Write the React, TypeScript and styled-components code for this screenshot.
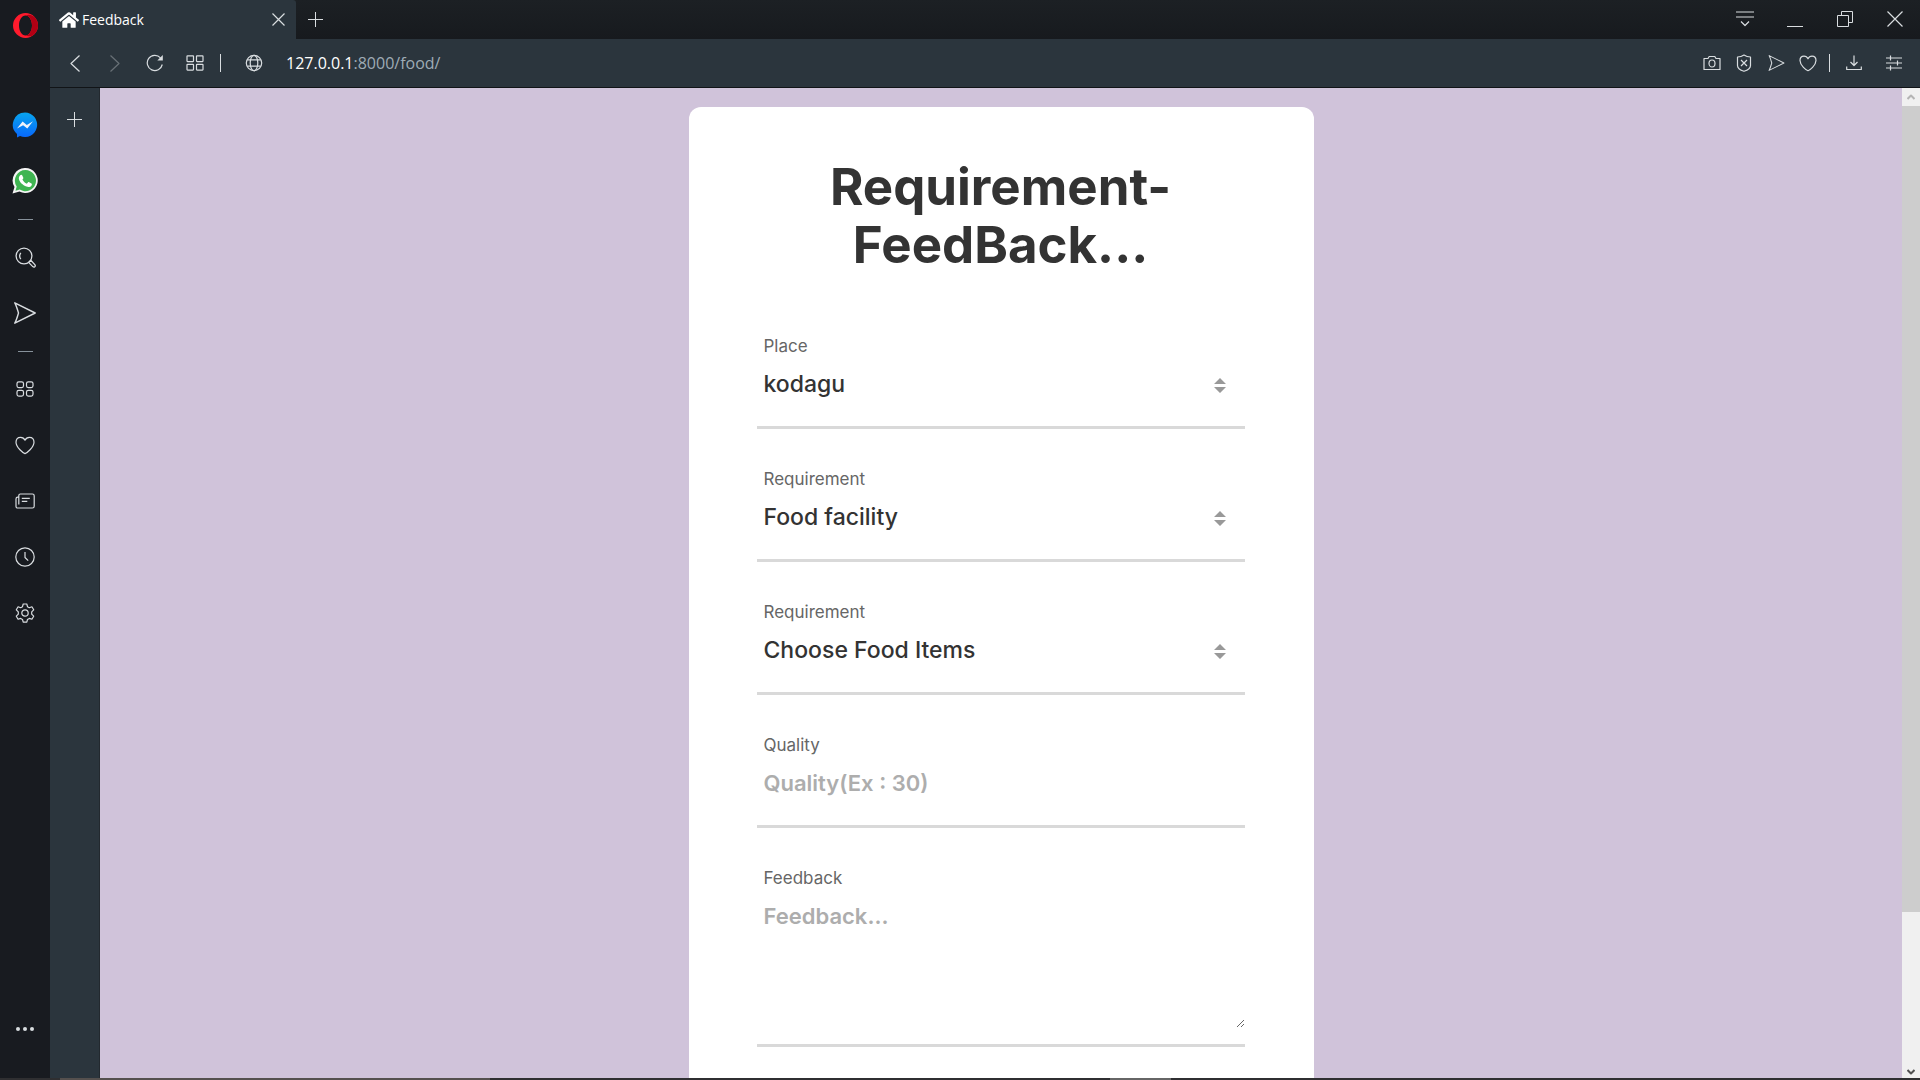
import React from "react";
import styled, { createGlobalStyle } from "styled-components";
import { FaHome } from "react-icons/fa";

const color = {
  chrome: "#2b353d",
  dark: "#181b20",
  line: "#111417",
  icon: "#d9dde0",
  page: "#d0c3da",
};

const GlobalStyle = createGlobalStyle`
  * { box-sizing: border-box; }
  body { margin: 0; background: ${color.page}; }
  button, input, select, textarea { font: inherit; margin: 0; }
`;

const Window = styled.div`
  display: flex;
  flex-direction: column;
  height: 100vh;
  overflow: hidden;
  background: ${color.dark};
  font-family: "Open Sans", "Noto Sans", sans-serif;
`;

const Frame = styled.div`
  display: flex;
  flex: 1;
  min-height: 0;
`;

const Column = styled.div`
  display: flex;
  flex-direction: column;
  flex: 1;
  min-width: 0;
`;

const Sidebar = styled.nav`
  display: flex;
  flex-direction: column;
  align-items: center;
  width: 50px;
  padding: 4px 0 21px;
  background: ${color.dark};
`;

const IconButton = styled.button<{ $w?: number; $h?: number; $dim?: boolean }>`
  display: flex;
  align-items: center;
  justify-content: center;
  flex: none;
  width: ${(p) => p.$w ?? 40}px;
  height: ${(p) => p.$h ?? 40}px;
  padding: 0;
  border: 0;
  background: none;
  color: ${color.icon};
  opacity: ${(p) => (p.$dim ? 0.35 : 1)};
`;

const SideGroup = styled.div<{ $first?: boolean }>`
  display: flex;
  flex-direction: column;
  margin-top: ${(p) => (p.$first ? 51 : 0)}px;
`;

const SideRule = styled.hr`
  width: 15px;
  height: 1px;
  margin: 10px 0 9px;
  border: 0;
  background: #87929b;
`;

const Spacer = styled.div`
  flex: 1;
`;

const TabBar = styled.header`
  display: flex;
  height: 39px;
  background: linear-gradient(#1c2024, #171a1e);
`;

const Tab = styled.div`
  display: flex;
  align-items: center;
  width: 246px;
  padding: 0 0 0 9px;
  border-radius: 0 3px 0 0;
  background: ${color.chrome};
  color: #fff;
  font-size: 14px;
  svg { flex: none; }
`;

const TabTitle = styled.span`
  flex: 1;
  margin-left: 3px;
`;

const Toolbar = styled.div`
  display: flex;
  align-items: center;
  height: 49px;
  padding: 0 6px 0 5px;
  background: ${color.chrome};
  border-bottom: 1px solid ${color.line};
`;

const BarRule = styled.span<{ $after: number }>`
  width: 1px;
  height: 18px;
  margin: 0 ${(p) => p.$after}px 0 5px;
  background: ${color.icon};
`;

const Address = styled.button`
  flex: 1;
  padding: 0 0 0 12px;
  border: 0;
  background: none;
  color: #9fabb5;
  font-size: 16px;
  line-height: 24px;
  text-align: left;
`;

const Host = styled.span`
  color: #fff;
`;

const Body = styled.div`
  display: flex;
  flex: 1;
  min-height: 0;
`;

const Workspace = styled.aside`
  width: 50px;
  padding: 11px 4px;
  background: ${color.chrome};
  border-right: 1px solid #23292f;
`;

const Page = styled.main`
  flex: 1;
  min-width: 0;
  padding: 19px 20px 0;
  overflow: hidden;
  background: ${color.page};
  font-family: Inter, sans-serif;
`;

const Card = styled.form`
  max-width: 625px;
  margin: 0 auto;
  padding: 51px 69px 64px 68px;
  border-radius: 12px;
  background: #fff;
`;

const Title = styled.h1`
  margin: 0 0 60px;
  color: #333;
  font-size: 51px;
  font-weight: 700;
  line-height: 58px;
  text-align: center;
`;

const Field = styled.div`
  position: relative;
  margin-bottom: 38px;
  border-bottom: 3px solid #d9d9d9;
`;

const Label = styled.label`
  display: block;
  margin-bottom: 10px;
  padding-left: 7px;
  color: #666;
  font-size: 17px;
  line-height: 24px;
`;

const controlStyle = `
  display: block;
  width: 100%;
  padding: 0 7px;
  border: 0;
  outline: 0;
  background: transparent;
  font-size: 23px;
  font-weight: 500;
  line-height: 33px;
  color: #333;
  &::placeholder { color: #adadad; opacity: 1; font-size: 22px; font-weight: 600; }
`;

const Select = styled.select`
  ${controlStyle}
  appearance: none;
  height: 33px;
  margin-bottom: 25px;
`;

const Input = styled.input`
  ${controlStyle}
  height: 33px;
  margin-bottom: 25px;
`;

const TextArea = styled.textarea`
  ${controlStyle}
  height: 128px;
  margin-bottom: 16px;
`;

const SortArrows = styled.svg`
  position: absolute;
  right: 19px;
  bottom: 33px;
  pointer-events: none;
`;

const ScrollTrack = styled.div`
  display: flex;
  flex-direction: column;
  width: 18px;
  background: #f0f0f0;
`;

const ScrollEnd = styled.div<{ $tone: string; $h: number }>`
  display: flex;
  align-items: center;
  justify-content: center;
  height: ${(p) => p.$h}px;
  color: ${(p) => p.$tone};
`;

const ScrollThumb = styled.div`
  flex: 806;
  background: #cdcdcd;
`;

const ScrollRest = styled.div`
  flex: 154;
`;

const Taskbar = styled.footer`
  display: flex;
  height: 2px;
  padding-left: 60px;
  background: #2f2f31;
`;

const TaskItem = styled.span<{ $w: number; $gap?: number; $c: string }>`
  width: ${(p) => p.$w}px;
  margin-left: ${(p) => p.$gap ?? 0}px;
  background: ${(p) => p.$c};
`;

type IconProps = { w: number; h?: number; sw?: number; children: React.ReactNode };
const Icon = ({ w, h = w, sw = 1.2, children }: IconProps) => (
  <svg width={w} height={h} viewBox={`0 0 ${w} ${h}`} fill="none" stroke="currentColor" strokeWidth={sw} strokeLinejoin="round" aria-hidden="true">
    {children}
  </svg>
);

const Plus = () => <Icon w={15} sw={1}><path d="M7.5 0v15M0 7.5h15" /></Icon>;
const Cross = ({ s }: { s: number }) => <Icon w={s}><path d={`M.5 .5L${s - 0.5} ${s - 0.5}M${s - 0.5} .5L.5 ${s - 0.5}`} /></Icon>;
const Back = () => <Icon w={10} h={17}><path d="M9.5 .5L1 8.500L9.500 16.500" /></Icon>;
const Forward = () => <Icon w={10} h={17}><path d="M.5 .5L9 8.500L.5 16.500" /></Icon>;
const Reload = () => (
  <Icon w={18}>
    <path d="M16.300 10.500A7.600 7.600 0 1 1 14.500 3.800" />
    <path d="M16.800 1v5.500h-5.500z" fill="currentColor" stroke="none" />
  </Icon>
);
const Tiles = ({ round = 0.5 }: { round?: number }) => (
  <Icon w={18} h={16}>
    <rect x="1" y=".8" width="6.500" height="5.800" rx={round} />
    <rect x="10.500" y=".8" width="6.500" height="5.800" rx={round} />
    <rect x="1" y="9.300" width="6.500" height="5.800" rx={round} />
    <rect x="10.500" y="9.300" width="6.500" height="5.800" rx={round} />
  </Icon>
);
const Globe = () => (
  <Icon w={18}>
    <circle cx="9" cy="9" r="7.700" />
    <ellipse cx="9" cy="9" rx="3.800" ry="7.700" />
    <path d="M2.200 5.800h13.600M2.200 12.200h13.600" />
  </Icon>
);
const Heart = () => (
  <Icon w={20} h={19}>
    <path d="M10 17.600C8.500 17.200 1 11.500 1 6.300 1 3.200 3 1.300 5.600 1.300c1.900 0 3.500 1 4.400 2.900.9-1.900 2.500-2.900 4.400-2.900C17 1.300 19 3.200 19 6.300c0 5.200-7.500 10.900-9 11.300z" />
  </Icon>
);
const SmallHeart = () => (
  <Icon w={18} h={17}>
    <path d="M9 15.700C7.500 15.200 1 10.500 1 5.600 1 2.900 2.700 1.200 5 1.200c1.800 0 3.200.9 4 2.600.8-1.700 2.200-2.600 4-2.600 2.300 0 4 1.700 4 4.400 0 4.900-6.500 9.600-8 10.100z" />
  </Icon>
);
const Send = ({ w, h }: { w: number; h: number }) => (
  <svg width={w} height={h} viewBox="0 0 22 22" fill="none" stroke="currentColor" strokeWidth="1.4" strokeLinejoin="round" aria-hidden="true">
    <path d="M.8 .8L21.200 11L.8 21.200Q2.500 18 4.500 11Q2.500 4 .8 .8z" />
  </svg>
);
const Camera = () => (
  <Icon w={18} h={16}>
    <path d="M1 3.500h4l1.200-2h5.600l1.200 2h4v11H1z" />
    <ellipse cx="9" cy="8.500" rx="3" ry="3.500" />
  </Icon>
);
const Shield = () => (
  <Icon w={16} h={18}>
    <path d="M8 1C6 2.400 3.700 3 1.500 3v8.500C1.500 14 4 16 8 17.300c4-1.300 6.500-3.300 6.500-5.800V3C12.300 3 10 2.400 8 1z" />
    <path d="M5 6l6 6M11 6l-6 6" />
  </Icon>
);
const Download = () => <Icon w={16} h={16}><path d="M8 .5v10M4.500 7L8 10.500L11.500 7M.7 11.500v3h14.600v-3" /></Icon>;
const Sliders = () => <Icon w={16} h={16}><path d="M0 3h16M0 8h16M0 13h16M4.500 .5v5M11.500 5.500v5M4.500 10.500v5" /></Icon>;
const TabMenu = () => <Icon w={18} h={16}><path d="M0 1h18M0 6h18M5 10.500l4 4 4-4" /></Icon>;
const Minimise = () => <Icon w={16} h={16} sw={1}><path d="M0 15.500h16" /></Icon>;
const Restore = () => <Icon w={16} h={16} sw={1}><path d="M.5 4.500h11v11H.5zM4.500 4.500v-4h11v11h-4" /></Icon>;
const Search = () => (
  <Icon w={21} sw={1.3}>
    <circle cx="9" cy="9" r="7.900" />
    <path d="M5.800 5.800q-2.300 3.200 0 6.400M13.600 15.400l2.200-2.200 4 4.400q1 1.300 0 2.100t-2-.1z" />
  </Icon>
);
const News = () => (
  <Icon w={20} h={16}>
    <path d="M3.800 2.600q0-1.600 1.600-1.600h12q1.800 0 1.800 1.800v10.400q0 1.800-1.800 1.800H2.800Q1 15 1 13.200V6q0-1.800 1.800-1.800h1M3.800 2.600v8.800M6.800 5.300h8M6.800 8.300h5.500" />
  </Icon>
);
const Clock = () => <Icon w={20}><circle cx="10" cy="10" r="9.200" /><path d="M10 5v5.500l3.200 3.200" /></Icon>;
const Gear = () => (
  <Icon w={20} h={20}>
    <path d="M8.200 1h3.600l.7 2.700 1.800 1 2.600-.9 1.800 3-2 2v2.400l2 2-1.800 3-2.600-.8-1.800 1-.7 2.700H8.200l-.7-2.700-1.800-1-2.600.8-1.800-3 2-2V8.800l-2-2 1.800-3 2.600.9 1.800-1z" />
    <circle cx="10" cy="10" r="3.200" />
  </Icon>
);
const Dots = () => (
  <svg width="18" height="4" fill="currentColor" aria-hidden="true">
    <circle cx="2" cy="2" r="2" /><circle cx="9" cy="2" r="2" /><circle cx="16" cy="2" r="2" />
  </svg>
);
const Opera = () => (
  <svg width="25" height="25" viewBox="0 0 25 25" aria-hidden="true">
    <path fillRule="evenodd" fill="#ff1b2d" d="M12.500 0a12.500 12.500 0 1 0 0 25 12.500 12.500 0 1 0 0-25zM12.500 2.500c3.700 0 6.500 4.500 6.500 10s-2.800 10-6.500 10S6 18 6 12.500s2.800-10 6.500-10z" />
    <path fill="#b20014" d="M12.500 2.500C16 .8 19.500 2 21.500 4 26.200 8.800 26.200 16.200 21.500 21 19.500 23 16 24.200 12.500 22.500c3.700 0 6.500-4.500 6.500-10s-2.800-10-6.500-10z" />
  </svg>
);
const Messenger = () => (
  <svg width="26" height="26" viewBox="0 0 26 26" aria-hidden="true">
    <defs>
      <linearGradient id="msg" x1="0" y1="0" x2="0" y2="1">
        <stop offset="0" stopColor="#08a5ee" /><stop offset="1" stopColor="#0867fb" />
      </linearGradient>
    </defs>
    <path fill="url(#msg)" d="M13 .5a12.300 12.300 0 1 1-5 23.600L5 25.500V22A12.300 12.300 0 0 1 13 .5z" />
    <path fill="#f1f4fb" d="M5 16.500L10.600 9.500l4.200 3.400 6.200-3.700-5.700 7.300-4.200-3.300z" />
  </svg>
);
const WhatsApp = () => (
  <svg width="26" height="26" viewBox="0 0 26 26" aria-hidden="true">
    <path fill="#f5f5f5" d="M13.500 0A12.500 12.500 0 1 1 7.500 23.600L.5 25.500 2.500 19A12.500 12.500 0 0 1 13.500 0z" />
    <path fill="#3fb551" d="M13.500 2A10.600 10.600 0 1 1 7.800 21.600L3.500 22.700 4.700 18.400A10.600 10.600 0 0 1 13.500 2z" />
    <path fill="#fff" d="M8.200 7.200c.8-.8 1.700-.7 2.100.2l1 2.300c.2.500-.1 1-.9 1.900 1 2 2.400 3.300 4.400 4.200l1.300-1.500c.3-.3.700-.3 1.100-.1l2.300 1.200c.6.4.4 1.300 0 2-.8 1.400-2.800 2-5 1.200-3.900-1.300-6.900-4.400-7.600-7.500-.3-1.500.4-3 1.300-3.900z" />
  </svg>
);

const SelectField = ({ id, label, value }: { id: string; label: string; value: string }) => (
  <Field>
    <Label htmlFor={id}>{label}</Label>
    <Select id={id} defaultValue={value}>
      <option>{value}</option>
    </Select>
    <SortArrows width="12" height="15" viewBox="0 0 12 15" fill="#999" aria-hidden="true">
      <path d="M6 0l6 6H0zM0 9h12l-6 6z" />
    </SortArrows>
  </Field>
);

export default function App() {
  return (
    <Window>
      <GlobalStyle />
      <Frame>
        <Sidebar>
          <IconButton $h={42} aria-label="Opera menu"><Opera /></IconButton>
          <SideGroup $first>
            <IconButton $h={56} aria-label="Messenger"><Messenger /></IconButton>
            <IconButton $h={56} aria-label="WhatsApp"><WhatsApp /></IconButton>
          </SideGroup>
          <SideRule />
          <SideGroup>
            <IconButton $h={56} aria-label="Search"><Search /></IconButton>
            <IconButton $h={56} aria-label="My Flow"><Send w={22} h={22} /></IconButton>
          </SideGroup>
          <SideRule />
          <SideGroup>
            <IconButton $h={56} aria-label="Speed Dial"><Tiles round={1.8} /></IconButton>
            <IconButton $h={56} aria-label="Bookmarks"><Heart /></IconButton>
            <IconButton $h={56} aria-label="News"><News /></IconButton>
            <IconButton $h={56} aria-label="History"><Clock /></IconButton>
            <IconButton $h={56} aria-label="Settings"><Gear /></IconButton>
          </SideGroup>
          <Spacer />
          <IconButton $h={56} aria-label="More"><Dots /></IconButton>
        </Sidebar>
        <Column>
          <TabBar>
            <Tab>
              <FaHome size={20} />
              <TabTitle>Feedback</TabTitle>
              <IconButton $w={36} $h={38} aria-label="Close tab"><Cross s={13} /></IconButton>
            </Tab>
            <IconButton $w={38} $h={38} aria-label="New tab"><Plus /></IconButton>
            <Spacer />
            <IconButton $w={50} $h={38} aria-label="Tab menu"><TabMenu /></IconButton>
            <IconButton $w={50} $h={38} aria-label="Minimise"><Minimise /></IconButton>
            <IconButton $w={50} $h={38} aria-label="Restore"><Restore /></IconButton>
            <IconButton $w={50} $h={38} aria-label="Close window"><Cross s={16} /></IconButton>
          </TabBar>
          <Toolbar>
            <IconButton aria-label="Back"><Back /></IconButton>
            <IconButton aria-label="Forward" $dim><Forward /></IconButton>
            <IconButton aria-label="Reload"><Reload /></IconButton>
            <IconButton aria-label="Speed Dial"><Tiles /></IconButton>
            <BarRule $after={13} />
            <IconButton aria-label="Site information"><Globe /></IconButton>
            <Address><Host>127.0.0.1</Host>:8000/food/</Address>
            <IconButton $w={32} aria-label="Snapshot"><Camera /></IconButton>
            <IconButton $w={32} aria-label="Ad blocker"><Shield /></IconButton>
            <IconButton $w={32} aria-label="Send to My Flow"><Send w={17} h={16} /></IconButton>
            <IconButton $w={32} aria-label="Bookmark"><SmallHeart /></IconButton>
            <BarRule $after={4} />
            <IconButton aria-label="Downloads"><Download /></IconButton>
            <IconButton aria-label="Easy setup"><Sliders /></IconButton>
          </Toolbar>
          <Body>
            <Workspace>
              <IconButton aria-label="Add workspace"><Plus /></IconButton>
            </Workspace>
            <Page>
              <Card>
                <Title>Requirement-FeedBack...</Title>
                <SelectField id="place" label="Place" value="kodagu" />
                <SelectField id="requirement" label="Requirement" value="Food facility" />
                <SelectField id="item" label="Requirement" value="Choose Food Items" />
                <Field>
                  <Label htmlFor="quality">Quality</Label>
                  <Input id="quality" placeholder="Quality(Ex : 30)" />
                </Field>
                <Field>
                  <Label htmlFor="feedback">Feedback</Label>
                  <TextArea id="feedback" placeholder="Feedback..." />
                </Field>
              </Card>
            </Page>
            <ScrollTrack>
              <ScrollEnd $h={18} $tone="#b4b4b4"><Icon w={8} h={6} sw={2}><path d="M.5 5L4 1.500L7.500 5" /></Icon></ScrollEnd>
              <ScrollThumb />
              <ScrollRest />
              <ScrollEnd $h={12} $tone="#505050"><Icon w={8} h={6} sw={2}><path d="M.5 1L4 4.500L7.500 1" /></Icon></ScrollEnd>
            </ScrollTrack>
          </Body>
        </Column>
      </Frame>
      <Taskbar>
        <TaskItem $w={430} $c="#55504e" />
        <TaskItem $w={61} $gap={620} $c="#666" />
      </Taskbar>
    </Window>
  );
}
